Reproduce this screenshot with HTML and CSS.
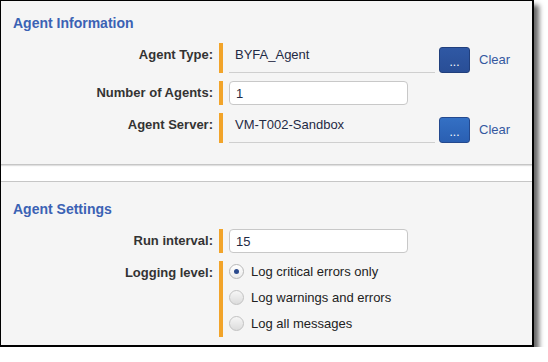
FILE: index.html
```html
<!DOCTYPE html>
<html lang="en">
<head>
<meta charset="utf-8">
<title>Agent</title>
<link rel="stylesheet" href="styles.css">
</head>
<body>
<div class="panel">
  <section class="section section-info">
    <h2 class="section-title">Agent Information</h2>
    <div class="rows">
      <div class="row">
        <div class="label">Agent Type:</div>
        <div class="field field-picker">
          <div class="value">BYFA_Agent</div>
          <div class="actions">
            <button type="button" class="browse-btn browse-btn-active">...</button>
            <a href="#" class="clear-link">Clear</a>
          </div>
        </div>
      </div>
      <div class="row">
        <div class="label">Number of Agents:</div>
        <div class="field">
          <input class="text-input" type="text" value="1">
        </div>
      </div>
      <div class="row">
        <div class="label">Agent Server:</div>
        <div class="field field-picker">
          <div class="value">VM-T002-Sandbox</div>
          <div class="actions">
            <button type="button" class="browse-btn">...</button>
            <a href="#" class="clear-link">Clear</a>
          </div>
        </div>
      </div>
    </div>
  </section>

  <section class="section section-settings">
    <h2 class="section-title">Agent Settings</h2>
    <div class="rows">
      <div class="row">
        <div class="label">Run interval:</div>
        <div class="field">
          <input class="text-input" type="text" value="15">
        </div>
      </div>
      <div class="row">
        <div class="label">Logging level:</div>
        <div class="field field-radios">
          <div class="option"><span class="radio radio-checked"></span><span class="option-text">Log critical errors only</span></div>
          <div class="option"><span class="radio"></span><span class="option-text">Log warnings and errors</span></div>
          <div class="option"><span class="radio"></span><span class="option-text">Log all messages</span></div>
        </div>
      </div>
    </div>
  </section>
</div>
</body>
</html>
```

FILE: styles.css
```css
* { box-sizing: border-box; }

html, body {
  margin: 0;
  padding: 0;
  background: #ffffff;
}

body {
  font-family: "Liberation Sans", Arial, sans-serif;
  font-size: 13px;
  color: #222;
}

.panel {
  width: 534px;
  height: 347px;
  border-style: solid;
  border-color: #000;
  border-width: 1px 2px 2px 1px;
  background: #ffffff;
  box-shadow: 5px 5px 5px rgba(0, 0, 0, 0.6);
  display: flex;
  flex-direction: column;
}

.section {
  background: #f5f5f5;
  display: flex;
  flex-direction: column;
}

.section-info {
  padding: 14px 0 21px;
  border-bottom: 1px solid #c6c6c6;
  box-shadow: 0 1px 1px rgba(0, 0, 0, 0.12);
}

.section-settings {
  margin-top: 16px;
  padding: 19px 0 8px;
  border-top: 1px solid #c6c6c6;
}

.section-title {
  margin: 0 0 11px 12px;
  font-size: 14px;
  line-height: 17px;
  font-weight: bold;
  color: #3b62b4;
}

.rows {
  display: flex;
  flex-direction: column;
  gap: 8px;
}

.row {
  display: flex;
  align-items: flex-start;
}

.label {
  width: 212px;
  margin-right: 6px;
  padding-top: 4px;
  text-align: right;
  font-weight: bold;
  line-height: 16px;
  color: #333;
}

.field {
  border-left: 4px solid #f2a42a;
  padding-left: 6px;
  display: flex;
}

.field-picker {
  align-items: flex-end;
}

.value {
  width: 206px;
  height: 30px;
  padding: 4px 6px 0;
  line-height: 16px;
  border-bottom: 1px solid #cfcfcf;
  color: #1f2a44;
}

.actions {
  margin-left: 4px;
  display: flex;
  align-items: center;
  gap: 9px;
}

.browse-btn {
  width: 31px;
  height: 26px;
  padding: 2px 0 0;
  border: 1px solid #24498e;
  border-radius: 3px;
  background: linear-gradient(#3470c4, #2a5fb2);
  color: #ffffff;
  font-family: "Liberation Sans", Arial, sans-serif;
  font-size: 12px;
  line-height: 24px;
}

.browse-btn-active {
  border-color: #213f7c;
  background: linear-gradient(#2f58a4, #294e96);
}

.clear-link {
  color: #34589f;
  text-decoration: none;
  line-height: 16px;
}

.text-input {
  width: 179px;
  height: 24px;
  margin: 0;
  padding: 0 6px;
  border: 1px solid #c8c8c8;
  border-radius: 4px;
  background: #ffffff;
  font-family: "Liberation Sans", Arial, sans-serif;
  font-size: 13px;
  color: #1f2a44;
  outline: none;
}

.field-radios {
  flex-direction: column;
  gap: 4px;
  padding-bottom: 2px;
}

.option {
  height: 22px;
  display: flex;
  align-items: flex-start;
}

.radio {
  width: 15px;
  height: 15px;
  margin-top: 3px;
  margin-right: 7px;
  border-radius: 50%;
  border: 1px solid #c2c2c2;
  background: linear-gradient(#f6f6f6, #dcdcdc);
  display: flex;
  align-items: center;
  justify-content: center;
}

.radio-checked {
  border-color: #b8b8b8;
  background: linear-gradient(#ffffff, #ececec);
}

.radio-checked::after {
  content: "";
  width: 5px;
  height: 5px;
  border-radius: 50%;
  background: #2b4a8d;
}

.option-text {
  padding-top: 3px;
  line-height: 16px;
  color: #222;
}
```
